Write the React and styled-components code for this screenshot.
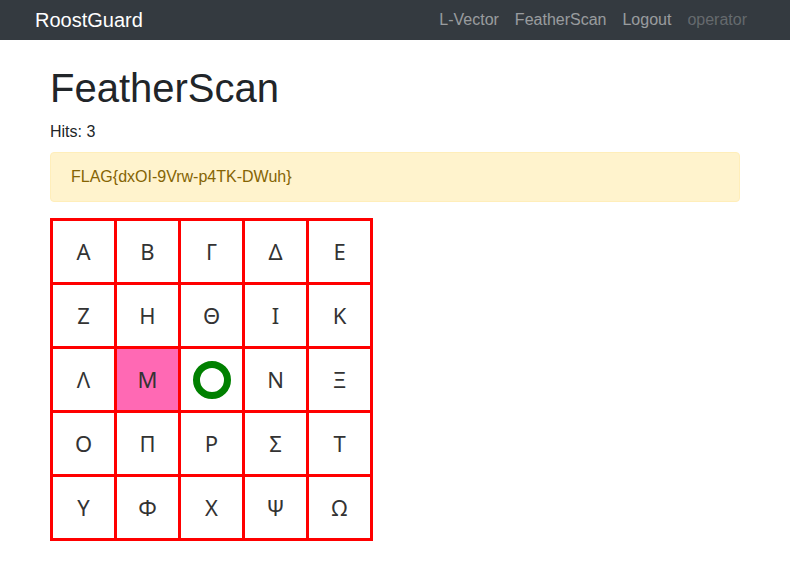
import React from "react";
import styled, { createGlobalStyle } from "styled-components";

const GlobalStyle = createGlobalStyle`
  * { box-sizing: border-box; }
  body {
    margin: 0;
    font-family: "Liberation Sans", Arial, sans-serif;
    font-size: 16px;
    line-height: 1.5;
    color: #212529;
    background: #ffffff;
  }
`;

const Navbar = styled.nav`
  height: 40px;
  background-color: #343a40;
`;

const NavInner = styled.div`
  width: 720px;
  height: 100%;
  margin: 0 auto;
  display: flex;
  align-items: center;
  justify-content: space-between;
`;

const Brand = styled.a`
  color: #ffffff;
  font-size: 20px;
  line-height: 30px;
  text-decoration: none;
`;

const NavList = styled.div`
  display: flex;
  align-items: center;
`;

const NavLink = styled.a`
  padding: 0 8px;
  color: ${(p) => (p.$muted ? "rgba(255,255,255,0.25)" : "rgba(255,255,255,0.5)")};
  text-decoration: none;
  font-size: 16px;
  line-height: 24px;
`;

const Container = styled.main`
  width: 720px;
  margin: 0 auto;
  padding: 24px 15px 0;
`;

const Title = styled.h1`
  margin: 0 0 8px;
  font-size: 40px;
  font-weight: 500;
  line-height: 1.2;
`;

const Hits = styled.p`
  margin: 0 0 8px;
`;

const Alert = styled.div`
  padding: 12px 20px;
  margin-bottom: 16px;
  border: 1px solid #ffeeba;
  border-radius: 4px;
  background-color: #fff3cd;
  color: #856404;
`;

const Board = styled.table`
  border-collapse: collapse;
  border: 3px solid #ff0000;
`;

const Cell = styled.td`
  width: 64px;
  height: 64px;
  padding: 0;
  border: 3px solid #ff0000;
  text-align: center;
  vertical-align: middle;
  font-family: "Noto Sans", sans-serif;
  font-size: 22px;
  color: #333333;
  background-color: ${(p) => (p.$hit ? "#ff69b4" : "transparent")};
`;

const Ring = styled.span`
  display: inline-block;
  width: 38px;
  height: 38px;
  border: 7px solid #008000;
  border-radius: 50%;
  vertical-align: middle;
`;

const letters = [
  ["Α", "Β", "Γ", "Δ", "Ε"],
  ["Ζ", "Η", "Θ", "Ι", "Κ"],
  ["Λ", "Μ", null, "Ν", "Ξ"],
  ["Ο", "Π", "Ρ", "Σ", "Τ"],
  ["Υ", "Φ", "Χ", "Ψ", "Ω"],
];

export default function App() {
  return (
    <>
      <GlobalStyle />
      <Navbar>
        <NavInner>
          <Brand href="#">RoostGuard</Brand>
          <NavList>
            <NavLink href="#">L-Vector</NavLink>
            <NavLink href="#">FeatherScan</NavLink>
            <NavLink href="#">Logout</NavLink>
            <NavLink $muted>operator</NavLink>
          </NavList>
        </NavInner>
      </Navbar>
      <Container>
        <Title>FeatherScan</Title>
        <Hits>Hits: 3</Hits>
        <Alert>FLAG{"{dxOI-9Vrw-p4TK-DWuh}"}</Alert>
        <Board>
          <tbody>
            {letters.map((row, r) => (
              <tr key={r}>
                {row.map((ch, c) => (
                  <Cell key={c} $hit={r === 2 && c === 1}>
                    {ch === null ? <Ring /> : ch}
                  </Cell>
                ))}
              </tr>
            ))}
          </tbody>
        </Board>
      </Container>
    </>
  );
}
